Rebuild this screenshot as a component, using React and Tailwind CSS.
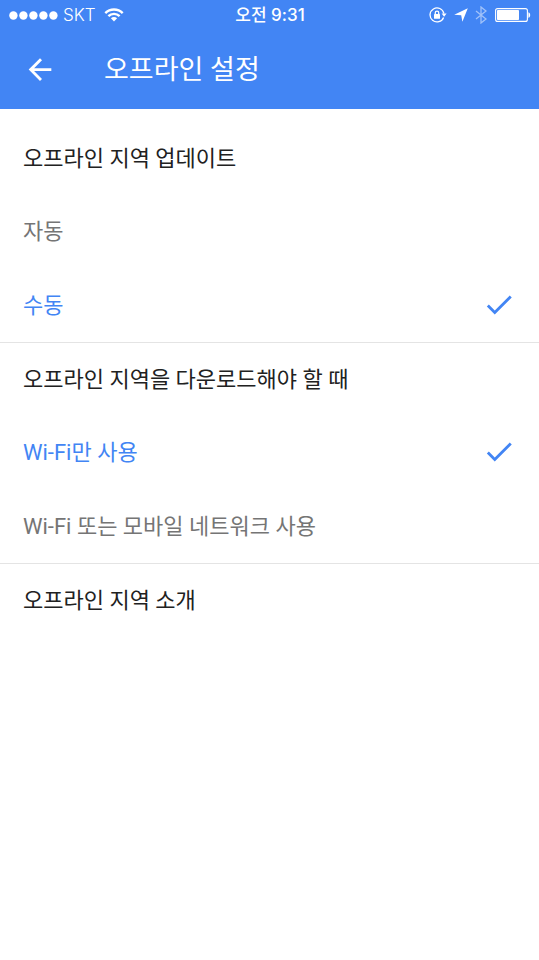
import { useState } from "react";

function StatusBar() {
  return (
    <div className="grid h-[30px] grid-cols-[1fr_auto_1fr] items-center pr-2 pl-[9px] font-['Inter','Noto_Sans_CJK_KR',sans-serif] text-[17px] leading-[30px]">
      <div className="flex items-center">
        <svg className="h-[9px] w-[49px]" viewBox="0 0 49 9" fill="currentColor" aria-hidden="true">
          <circle cx="4.4" cy="4.5" r="4.2" />
          <circle cx="14.4" cy="4.5" r="4.2" />
          <circle cx="24.4" cy="4.5" r="4.2" />
          <circle cx="34.4" cy="4.5" r="4.2" />
          <circle cx="44.4" cy="4.5" r="4.2" />
        </svg>
        <span className="ml-[5px] font-light">SKT</span>
        <svg className="ml-2 h-[14px] w-[20px]" viewBox="0 0 20 14" fill="none" stroke="currentColor" strokeWidth="2.4" aria-hidden="true">
          <path d="M1.3 5.1a12.3 12.3 0 0 1 17.4 0" />
          <path d="M4.4 8.2a7.9 7.9 0 0 1 11.2 0" />
          <path d="M10 13.4 6.9 10.3a4.4 4.4 0 0 1 6.2 0z" fill="currentColor" stroke="none" />
        </svg>
      </div>
      <div className="font-medium">오전 9:31</div>
      <div className="flex items-center justify-end">
        <svg className="h-4 w-[18px]" viewBox="0 0 18 16" fill="none" stroke="currentColor" strokeWidth="1.3" aria-hidden="true">
          <path d="M14.6 10.4A7 7 0 1 1 14.9 6.5" />
          <path d="M12.6 6.6h5L15.1 9.8z" fill="currentColor" stroke="none" />
          <rect x="5" y="7" width="6" height="4.8" rx=".6" fill="currentColor" stroke="none" />
          <path d="M6.3 7.2V5.8a1.7 1.7 0 0 1 3.4 0v1.4" />
        </svg>
        <svg className="ml-[7px] h-[14px] w-[14px]" viewBox="0 0 14 14" fill="currentColor" aria-hidden="true">
          <path d="M13.8.3 8.4 13.7 7.2 7.3.2 6.7z" />
        </svg>
        <svg className="ml-[7px] h-[18px] w-3 opacity-50" viewBox="0 0 12 18" fill="none" stroke="currentColor" strokeWidth="1.3" aria-hidden="true">
          <path d="M1 5l10 8-5 4V1l5 4-10 8" />
        </svg>
        <svg className="ml-2 h-[14px] w-[36px]" viewBox="0 0 36 14" aria-hidden="true">
          <rect x=".6" y=".6" width="31.8" height="12.8" rx="2" fill="none" stroke="currentColor" strokeWidth="1.1" />
          <rect x="2" y="2" width="22" height="10" rx=".8" fill="currentColor" />
          <path d="M33.4 4.2c2.4.8 2.4 4.8 0 5.6z" fill="currentColor" />
        </svg>
      </div>
    </div>
  );
}

function Header() {
  return (
    <header className="bg-[#4285f4] text-white">
      <StatusBar />
      <div className="flex h-[79px] items-center pl-[23px]">
        <button type="button" aria-label="뒤로" className="flex h-12 w-[81px] items-center">
          <svg className="h-[34px] w-[34px]" viewBox="0 0 24 24" fill="currentColor" aria-hidden="true">
            <path d="M20 10.7H7.83l5.59-5.59L12 3.7l-8 8 8 8 1.41-1.41L7.83 12.7H20v-2z" />
          </svg>
        </button>
        <h1 className="text-[27px] leading-10">오프라인 설정</h1>
      </div>
    </header>
  );
}

function OptionGroup({ title, name, options, initial }) {
  const [selected, setSelected] = useState(initial);
  return (
    <fieldset className="border-b border-[#e4e4e4]">
      <legend className="flex h-[73px] w-full items-center px-[23px] text-[#212121]">{title}</legend>
      <div className="flex flex-col">
        {options.map((option) => (
          <label
            key={option}
            className="relative flex h-[74px] items-center justify-between px-[23px] text-[#757575] last:h-[73px] has-checked:text-[#4285f4]"
          >
            <input
              type="radio"
              name={name}
              className="peer sr-only"
              checked={selected === option}
              onChange={() => setSelected(option)}
            />
            <span>{option}</span>
            <svg className="invisible h-[34px] w-[34px] peer-checked:visible" viewBox="0 0 24 24" fill="currentColor" aria-hidden="true">
              <path d="M9 15.17 4.83 11l-1.42 1.41L9 18 21 6l-1.41-1.41z" />
            </svg>
          </label>
        ))}
      </div>
    </fieldset>
  );
}

export default function App() {
  return (
    <div className="min-h-screen bg-white font-[Roboto,'Noto_Sans_CJK_KR',sans-serif]">
      <Header />
      <main className="pt-[13px] text-[22px] leading-8">
        <OptionGroup title="오프라인 지역 업데이트" name="update" options={["자동", "수동"]} initial="수동" />
        <OptionGroup
          title="오프라인 지역을 다운로드해야 할 때"
          name="download"
          options={["Wi-Fi만 사용", "Wi-Fi 또는 모바일 네트워크 사용"]}
          initial="Wi-Fi만 사용"
        />
        <a href="#about" className="flex h-[73px] items-center px-[23px] text-[#212121]">
          오프라인 지역 소개
        </a>
      </main>
    </div>
  );
}
